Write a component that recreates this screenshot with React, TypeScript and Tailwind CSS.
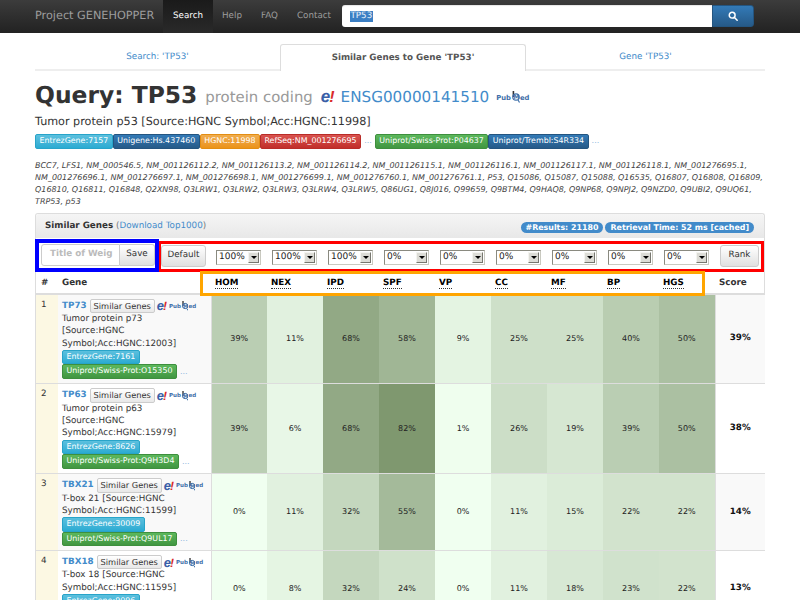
import React from "react";

const F = "[font-family:'DejaVu_Sans',sans-serif] [text-rendering:geometricPrecision]";

function heat(v: number) {
  return `rgb(${Math.round(240 - 1.38 * v)},${Math.round(255 - 1.26 * v)},${Math.round(240 - 1.57 * v)})`;
}

function Ensembl({ small }: { small?: boolean }) {
  return (
    <span className={`inline-flex items-baseline font-['Liberation_Sans',sans-serif] italic font-bold leading-none ${small ? "text-[13px]" : "text-[17px]"}`}>
      <span className="text-[#3a5fa8]">e</span>
      <span className={`text-[#d92b2b] -ml-[1px] ${small ? "text-[12px]" : "text-[16px]"}`}>!</span>
    </span>
  );
}

function PubMed({ small }: { small?: boolean }) {
  return (
    <span className={`inline-flex items-center font-bold text-[#3d6ea8] leading-none ${small ? "text-[5.5px]" : "text-[6.8px]"}`}>
      <span className={small ? "mt-[2px]" : "mt-[3px]"}>Pub</span>
      <svg viewBox="0 0 9 12" className={small ? "h-[10px] w-[7.5px]" : "h-[12px] w-[9px]"}>
        <path d="M2.4 0V6" stroke="#333" strokeWidth="1.6" />
        <circle cx="5" cy="6" r="3.2" fill="none" stroke="#3d6ea8" strokeWidth="1.2" />
        <text x="2.6" y="8" fontSize="6" fontWeight="700" fill="#3d6ea8">M</text>
        <path d="M7 9L8.5 11.5" stroke="#3d6ea8" strokeWidth="1.2" />
      </svg>
      <span className={small ? "mt-[2px]" : "mt-[3px]"}>ed</span>
    </span>
  );
}

const labelColor: Record<string, string> = {
  info: "bg-gradient-to-b from-[#5bc0de] to-[#2aabd2] border-[#28a4c9]",
  primary: "bg-gradient-to-b from-[#337ab7] to-[#265a88] border-[#245580]",
  warning: "bg-gradient-to-b from-[#f0ad4e] to-[#eb9316] border-[#e38d13]",
  danger: "bg-gradient-to-b from-[#d9534f] to-[#c12e2a] border-[#b92c28]",
  success: "bg-gradient-to-b from-[#5cb85c] to-[#419641] border-[#3e8f3e]",
};

function Label({ kind, children }: { kind: string; children: React.ReactNode }) {
  return (
    <span className={`inline-block h-[14.5px] px-[3.5px] rounded-[2px] border text-white text-[7.9px] leading-[12.5px] whitespace-nowrap ${labelColor[kind]}`}>
      {children}
    </span>
  );
}

function Sel({ v }: { v: string }) {
  return (
    <span className="inline-flex items-center justify-between w-[45px] h-[15px] border border-[#8a8a80] border-r-[#c9c9c0] border-b-[#c9c9c0] bg-white pl-[2px] pr-[1px] text-[9px] text-[#222] box-border">
      <span>{v}</span>
      <span className="flex items-center justify-center w-[11px] h-[11px] bg-[#dcdcd6] border border-[#f4f4f0] border-r-[#77776f] border-b-[#77776f]">
        <span className="w-0 h-0 border-l-[3px] border-r-[3px] border-t-[3px] border-l-transparent border-r-transparent border-t-black" />
      </span>
    </span>
  );
}

type Row = {
  n: number;
  sym: string;
  desc: React.ReactNode;
  entrez: string;
  uni: string;
  vals: number[];
  score: string;
};

const rows: Row[] = [
  {
    n: 1,
    sym: "TP73",
    desc: <>Tumor protein p73<br />[Source:HGNC<br />Symbol;Acc:HGNC:12003]</>,
    entrez: "EntrezGene:7161",
    uni: "Uniprot/Swiss-Prot:O15350",
    vals: [39, 11, 68, 58, 9, 25, 25, 40, 50],
    score: "39%",
  },
  {
    n: 2,
    sym: "TP63",
    desc: <>Tumor protein p63<br />[Source:HGNC<br />Symbol;Acc:HGNC:15979]</>,
    entrez: "EntrezGene:8626",
    uni: "Uniprot/Swiss-Prot:Q9H3D4",
    vals: [39, 6, 68, 82, 1, 26, 19, 39, 50],
    score: "38%",
  },
  {
    n: 3,
    sym: "TBX21",
    desc: <>T-box 21 [Source:HGNC<br />Symbol;Acc:HGNC:11599]</>,
    entrez: "EntrezGene:30009",
    uni: "Uniprot/Swiss-Prot:Q9UL17",
    vals: [0, 11, 32, 55, 0, 11, 15, 22, 22],
    score: "14%",
  },
  {
    n: 4,
    sym: "TBX18",
    desc: <>T-box 18 [Source:HGNC<br />Symbol;Acc:HGNC:11595]</>,
    entrez: "EntrezGene:9096",
    uni: "Uniprot/Swiss-Prot:O95935",
    vals: [0, 8, 32, 24, 0, 11, 18, 23, 22],
    score: "13%",
  },
];

const cols = ["HOM", "NEX", "IPD", "SPF", "VP", "CC", "MF", "BP", "HGS"];
const sels = ["100%", "100%", "100%", "0%", "0%", "0%", "0%", "0%", "0%"];

export default function App() {
  return (
    <div className={`${F} relative h-[600px] w-[800px] overflow-hidden bg-white text-[#333]`}>
      {/* navbar */}
      <nav className="flex h-[33px] items-stretch bg-gradient-to-b from-[#3c3c3c] to-[#222] pl-[35px]">
        <a className="w-[128px] text-[11.25px] leading-[31px] text-[#9d9d9d]">Project GENEHOPPER</a>
        <a className="flex w-[50px] items-center justify-center bg-gradient-to-b from-[#1a1a1a] to-[#2a2a2a] text-[8.75px] text-white">Search</a>
        <a className="flex w-[38px] items-center justify-center text-[8.75px] text-[#9d9d9d]">Help</a>
        <a className="flex w-[37px] items-center justify-center text-[8.75px] text-[#9d9d9d]">FAQ</a>
        <a className="flex w-[52px] items-center justify-center text-[8.75px] text-[#9d9d9d]">Contact</a>
        <div className="ml-[2px] mt-[5px] flex h-[22px]">
          <div className="flex h-[22px] w-[370px] items-center rounded-l-[3px] bg-white pl-[8px] text-[8.75px] shadow-[inset_0_1px_1px_rgba(0,0,0,0.1)]">
            <span className="bg-[#3b7fc4] px-[0.5px] leading-[11px] text-white/90">TP53</span>
          </div>
          <button className="flex h-[22px] w-[42px] items-center justify-center rounded-r-[3px] border border-[#245580] bg-gradient-to-b from-[#337ab7] to-[#265a88]">
            <svg viewBox="0 0 12 12" className="h-[10px] w-[10px]" fill="none" stroke="white" strokeWidth="1.8">
              <circle cx="5" cy="5" r="3.5" />
              <path d="M7.5 7.5L11 11" strokeLinecap="round" />
            </svg>
          </button>
        </div>
      </nav>

      <div className="mx-[35px] w-[730px]">
        {/* tabs */}
        <div className="mt-[11px] flex h-[27px] text-[8.75px]">
          <div className="flex w-[245px] items-center justify-center border-b-2 border-b-[#eee] pt-[2px] text-[#428bca]">Search: 'TP53'</div>
          <div className="flex w-[246px] items-center justify-center rounded-t-[3px] border border-b-0 border-[#ddd] pt-[2px] font-bold text-[#555]">Similar Genes to Gene 'TP53'</div>
          <div className="flex w-[239px] items-center justify-center border-b-2 border-b-[#eee] pt-[2px] text-[#428bca]">Gene 'TP53'</div>
        </div>

        {/* heading */}
        <div className="mt-[8px] flex h-[33px] items-center whitespace-nowrap">
          <h1 className="text-[23.4px] font-bold leading-none text-[#333]">Query: TP53</h1>
          <span className="ml-[8px] mt-[4px] text-[14.9px] text-[#999]">protein coding</span>
          <span className="ml-[8px] mt-[2px] flex"><Ensembl /></span>
          <a className="ml-[6px] mt-[4px] text-[15.2px] text-[#428bca]">ENSG00000141510</a>
          <span className="ml-[7px] mt-[3px] flex"><PubMed /></span>
        </div>
        <p className="mt-[3px] text-[11.2px] leading-[14px]">Tumor protein p53 [Source:HGNC Symbol;Acc:HGNC:11998]</p>

        <div className="mt-[5px] flex items-center whitespace-nowrap">
          <Label kind="info">EntrezGene:7157</Label>
          <Label kind="primary">Unigene:Hs.437460</Label>
          <Label kind="warning">HGNC:11998</Label>
          <Label kind="danger">RefSeq:NM_001276695</Label>
          <span className="mx-[3px] text-[8px] text-[#8fb8de]">...</span>
          <Label kind="success">Uniprot/Swiss-Prot:P04637</Label>
          <Label kind="primary">Uniprot/Trembl:S4R334</Label>
          <span className="ml-[3px] text-[8px] text-[#8fb8de]">...</span>
        </div>

        <p className="mt-[11px] text-[8px] italic leading-[12px] text-[#444]">
          BCC7, LFS1, NM_000546.5, NM_001126112.2, NM_001126113.2, NM_001126114.2, NM_001126115.1, NM_001126116.1, NM_001126117.1, NM_001126118.1, NM_001276695.1,<br />
          NM_001276696.1, NM_001276697.1, NM_001276698.1, NM_001276699.1, NM_001276760.1, NM_001276761.1, P53, Q15086, Q15087, Q15088, Q16535, Q16807, Q16808, Q16809,<br />
          Q16810, Q16811, Q16848, Q2XN98, Q3LRW1, Q3LRW2, Q3LRW3, Q3LRW4, Q3LRW5, Q86UG1, Q8J016, Q99659, Q9BTM4, Q9HAQ8, Q9NP68, Q9NPJ2, Q9NZD0, Q9UBI2, Q9UQ61,<br />
          TRP53, p53
        </p>

        {/* panel */}
        <div className="relative mt-[5px] rounded-t-[3px] border border-b-0 border-[#ddd]">
          <div className="flex h-[24px] items-center justify-between rounded-t-[3px] bg-gradient-to-b from-[#f5f5f5] to-[#e8e8e8] pl-[9px] pr-[10px] pt-[3px] text-[8.75px]">
            <span><b className="text-[#333]">Similar Genes</b> <span className="text-[#777]">(</span><a className="text-[#428bca]">Download Top1000</a><span className="text-[#777]">)</span></span>
            <span className="flex gap-[2px] text-[7.9px] font-bold text-white">
              <span className="rounded-[6px] bg-[#428bca] px-[5px] leading-[11px]">#Results: 21180</span>
              <span className="rounded-[6px] bg-[#428bca] px-[5px] leading-[11px]">Retrieval Time: 52 ms [cached]</span>
            </span>
          </div>

          <div className="flex h-[34px] items-start">
            <div className="flex h-[33px] w-[124px] shrink-0 items-center border-[4px] border-[#0000ff] pl-[2px] mt-[1px] -ml-[1px]">
              <div className="flex h-[22px] w-[79px] items-center rounded-l-[3px] border border-[#ccc] pl-[8px] text-[8.75px] font-bold text-[#bbb] overflow-hidden whitespace-nowrap">Title of Weig</div>
              <div className="flex h-[22px] w-[35px] items-center justify-center rounded-r-[3px] border border-l-0 border-[#ccc] bg-gradient-to-b from-[#fff] to-[#e0e0e0] text-[8.75px] text-[#333]">Save</div>
            </div>
            <div className="mt-[3px] flex h-[31px] flex-1 items-center border-[3px] border-l-2 border-[#ff0000]">
              <div className="flex h-[22px] w-[45px] shrink-0 items-center justify-center rounded-[3px] border border-[#ccc] bg-gradient-to-b from-[#fff] to-[#e0e0e0] text-[8.75px] text-[#333]">Default</div>
              <div className="ml-[10px] mt-[3px] grid w-[504px] shrink-0 grid-cols-[repeat(9,56px)]">
                {sels.map((s, i) => <Sel key={i} v={s} />)}
              </div>
              <div className="flex h-[22px] w-[39px] shrink-0 items-center justify-center rounded-[3px] border border-[#ccc] bg-gradient-to-b from-[#fff] to-[#e0e0e0] text-[8.75px] text-[#333]">Rank</div>
            </div>
          </div>

          <table className="w-[729px] table-fixed border-collapse text-[8.75px]">
            <colgroup>
              <col className="w-[22px]" />
              <col className="w-[153px]" />
              {cols.map((c) => <col key={c} className="w-[56px]" />)}
              <col className="w-[50px]" />
            </colgroup>
            <thead>
              <tr className="h-[22px] border-b-2 border-[#ddd] text-left">
                <th className="pl-[5px] pt-[4px] font-bold">#</th>
                <th className="pl-[4px] pt-[4px] font-bold">Gene</th>
                {cols.map((c) => (
                  <th key={c} className="pl-[4px] pt-[4px] font-bold text-black">
                    <span className="border-b border-dotted border-[#333]">{c}</span>
                  </th>
                ))}
                <th className="pl-[4px] pt-[4px] font-bold">Score</th>
              </tr>
            </thead>
            <tbody>
              {rows.map((r) => (
                <tr key={r.n} className="border-b border-[#ddd]">
                  <td className="bg-[#fcf8e3] px-[5px] pt-[4px] align-top">{r.n}</td>
                  <td className={`border-r border-[#ddd] pl-[4px] pt-[4px] align-top leading-[12.3px] ${r.n > 2 ? "pb-[3.5px]" : "pb-[4.5px]"} ${r.n % 2 ? "bg-[#f9f9f9]" : "bg-white"}`}>
                    <div className="flex h-[14.5px] items-center whitespace-nowrap">
                      <a className="font-bold text-[8.75px] text-[#428bca]">{r.sym}</a>
                      <span className="ml-[3px] flex h-[14.5px] items-center rounded-[2px] border border-[#ccc] bg-gradient-to-b from-[#fff] to-[#e8e8e8] px-[3px] text-[8.25px] text-[#333]">Similar Genes</span>
                      <span className="ml-[2px] flex"><Ensembl small /></span>
                      <span className="ml-[2px] mt-[1px] flex"><PubMed small /></span>
                    </div>
                    <div className="text-[#333]">{r.desc}</div>
                    <div className="flex h-[14.5px] leading-none"><Label kind="info">{r.entrez}</Label></div>
                    <div className="flex h-[14.5px] items-center leading-none">
                      <Label kind="success">{r.uni}</Label>
                      <span className="ml-[3px] text-[8px] text-[#8fb8de]">...</span>
                    </div>
                  </td>
                  {r.vals.map((v, i) => (
                    <td key={i} className="p-0 text-center align-middle text-[8px] text-[#222]" style={{ backgroundColor: heat(v) }}>{v}%</td>
                  ))}
                  <td className={`border-l border-[#ddd] text-center align-middle font-bold text-[8.75px] text-[#111] ${r.n % 2 ? "bg-[#f9f9f9]" : "bg-white"}`}>{r.score}</td>
                </tr>
              ))}
            </tbody>
          </table>

          {/* annotation overlay around the weight headers */}
          <div className="pointer-events-none absolute left-[164px] top-[57px] h-[25px] w-[505px] border-[3px] border-[#ffa500]" />
        </div>
      </div>
    </div>
  );
}
